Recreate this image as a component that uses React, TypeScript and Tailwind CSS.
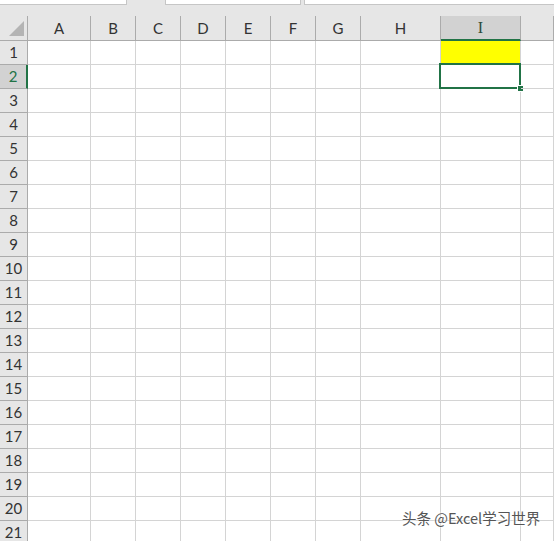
import React from "react";

const cols = [
  { name: "A", w: "w-[63px]" },
  { name: "B", w: "w-[45px]" },
  { name: "C", w: "w-[45px]" },
  { name: "D", w: "w-[45px]" },
  { name: "E", w: "w-[45px]" },
  { name: "F", w: "w-[45px]" },
  { name: "G", w: "w-[45px]" },
  { name: "H", w: "w-[80px]" },
  { name: "I", w: "w-[80px]" },
  { name: "", w: "flex-1" },
];

const rows = Array.from({ length: 21 }, (_, i) => i + 1);

export default function App() {
  return (
    <div
      className="relative w-[554px] h-[541px] overflow-hidden bg-white"
      style={{ fontFamily: "Lato, 'Open Sans', sans-serif" }}
    >
      {/* top strip with tabs */}
      <div className="h-[16px] bg-[#e6e6e6] relative">
        <div className="flex h-[5px]">
          <div className="w-[127px] bg-white border-b border-r border-[#c6c6c6]" />
          <div className="w-[38px]" />
          <div className="w-[136px] bg-white border-b border-l border-r border-[#c6c6c6]" />
          <div className="w-[3px]" />
          <div className="flex-1 bg-white border-b border-l border-[#c6c6c6]" />
        </div>
      </div>
      {/* header row */}
      <div className="flex h-[25px] bg-[#e6e6e6]">
        <div className="w-[28px] border-r border-b border-[#ababab] relative">
          <svg className="absolute left-[8px] top-[5px]" width="16" height="16" viewBox="0 0 16 16">
            <polygon points="16,0 16,15 1,15" fill="#b4b4b4" />
          </svg>
        </div>
        {cols.map((c, i) =>
          c.name === "I" ? (
            <div
              key={i}
              className={`${c.w} shrink-0 bg-[#d2d2d2] border-r border-[#ababab] border-b-2 border-b-[#217346] flex items-center justify-center text-[16px] text-[#2d4a3a] leading-none`}
              style={{ fontFamily: "'Liberation Serif', serif" }}
            >
              I
            </div>
          ) : (
            <div
              key={i}
              className={`${c.w} ${c.name ? "shrink-0" : ""} border-r border-b border-[#ababab] flex items-center justify-center text-[15px] text-[#333] leading-none pt-[1px]`}
            >
              {c.name}
            </div>
          )
        )}
      </div>
      {/* body rows */}
      {rows.map((r) => (
        <div key={r} className={`flex h-[24px] relative ${r === 2 ? "z-10" : ""}`}>
          <div
            className={`w-[28px] shrink-0 border-b border-[#ababab] flex items-center justify-center text-[15px] leading-none ${
              r === 2
                ? "bg-[#d2d2d2] border-r-2 border-r-[#217346] text-[#217346]"
                : "bg-[#e6e6e6] border-r border-r-[#ababab] text-[#333]"
            }`}
          >
            {r}
          </div>
          {cols.map((c, i) => {
            const isI = c.name === "I";
            return (
              <div
                key={i}
                className={`${c.w} ${c.name ? "shrink-0" : ""} border-r border-b border-[#d4d4d4] relative ${
                  isI && r === 1 ? "bg-[#ffff00]" : ""
                }`}
              >
                {isI && r === 2 && (
                  <>
                    <div className="absolute left-[-2px] top-[-2px] right-[-1px] bottom-[-1px] border-2 border-[#217346]" />
                    <div className="absolute right-[-4px] bottom-[-4px] w-[7px] h-[7px] bg-[#217346] border border-white" />
                  </>
                )}
              </div>
            );
          })}
        </div>
      ))}
      {/* watermark */}
      <div
        className="absolute left-[402px] top-[511px] text-[14.5px] text-[#555] leading-none whitespace-nowrap"
        style={{
          fontFamily: "'Noto Sans CJK SC', sans-serif",
          textShadow: "0 0 2px #fff, 0 0 2px #fff",
        }}
      >
        头条 @Excel学习世界
      </div>
    </div>
  );
}
